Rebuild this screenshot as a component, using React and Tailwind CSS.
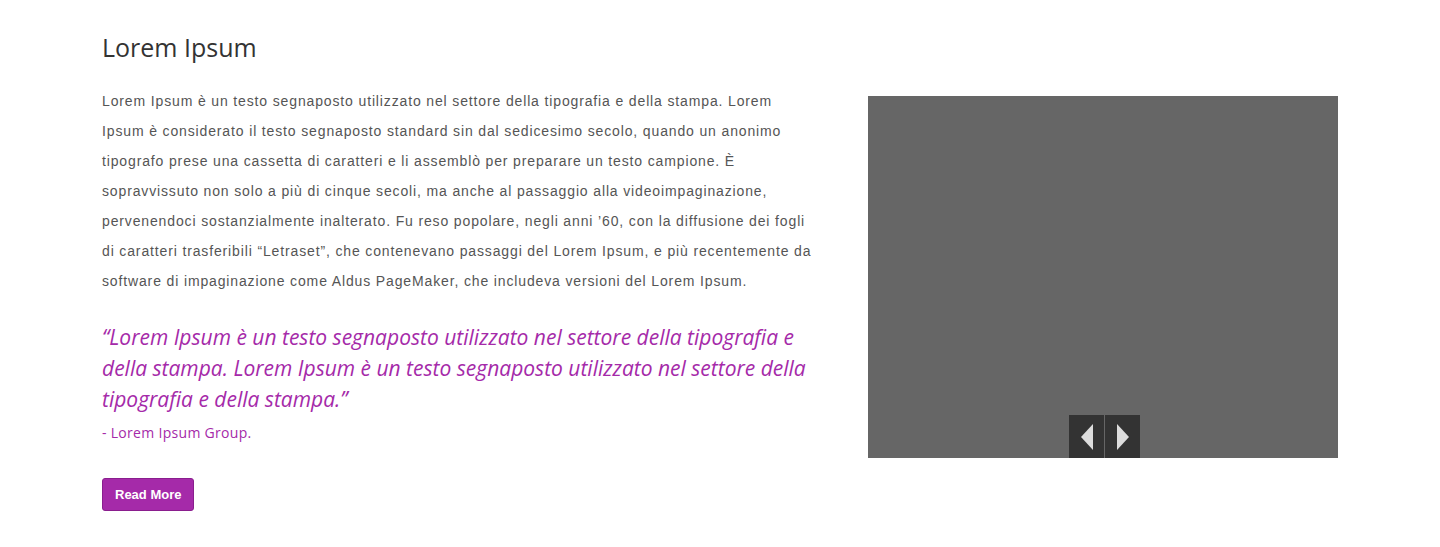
const Slider = () => {
  return (
    <div className="relative mt-[15px] h-[362px] w-[470px] shrink-0 bg-[#666666]">
      <div className="absolute bottom-0 left-[201px] flex gap-px">
        <button className="flex h-[43px] w-[35px] items-center justify-center bg-[#333333]">
          <svg width="12" height="26" viewBox="0 0 12 26">
            <polygon points="12,0 12,26 0,13" fill="#dddddd" />
          </svg>
        </button>
        <button className="flex h-[43px] w-[35px] items-center justify-center bg-[#333333]">
          <svg width="12" height="26" viewBox="0 0 12 26">
            <polygon points="0,0 0,26 12,13" fill="#dddddd" />
          </svg>
        </button>
      </div>
    </div>
  );
};

const App = () => {
  return (
    <section className="min-h-[547px] bg-white">
      <div className="mx-auto w-[1236px] pt-[30px]">
        <h2 className="font-['Open_Sans',sans-serif] text-[25px] leading-[34px] text-[#333333]">
          Lorem Ipsum
        </h2>

        <div className="mt-[17px] flex gap-[48px]">
          {/* Text column */}
          <div className="w-[718px]">
            <p className="mt-[5px] whitespace-nowrap font-['Liberation_Sans',Arial,sans-serif] text-[14px] leading-[30px] tracking-[0.86px] text-[#555555]">
              Lorem Ipsum è un testo segnaposto utilizzato nel settore della tipografia e della stampa. Lorem
              <br />
              Ipsum è considerato il testo segnaposto standard sin dal sedicesimo secolo, quando un anonimo
              <br />
              tipografo prese una cassetta di caratteri e li assemblò per preparare un testo campione. È
              <br />
              sopravvissuto non solo a più di cinque secoli, ma anche al passaggio alla videoimpaginazione,
              <br />
              pervenendoci sostanzialmente inalterato. Fu reso popolare, negli anni ’60, con la diffusione dei fogli
              <br />
              di caratteri trasferibili “Letraset”, che contenevano passaggi del Lorem Ipsum, e più recentemente da
              <br />
              software di impaginazione come Aldus PageMaker, che includeva versioni del Lorem Ipsum.
            </p>

            <blockquote className="mt-[26px] font-['Open_Sans',sans-serif] text-[#a52aa9]">
              <p className="text-[21px] italic leading-[31px]">
                “Lorem Ipsum è un testo segnaposto utilizzato nel settore della tipografia e della stampa. Lorem
                Ipsum è un testo segnaposto utilizzato nel settore della tipografia e della stampa.”
              </p>
              <p className="mt-[6px] text-[14px] leading-[24px] tracking-[0.3px]">- Lorem Ipsum Group.</p>
            </blockquote>

            <button className="mt-[33px] h-[33px] rounded-[3px] border border-[#8a1e8e] bg-[#a52aa9] px-[12px] font-['Liberation_Sans',Arial,sans-serif] text-[13px] font-bold text-white">
              Read More
            </button>
          </div>

          {/* Image slider */}
          <Slider />
        </div>
      </div>
    </section>
  );
};

export default App;
